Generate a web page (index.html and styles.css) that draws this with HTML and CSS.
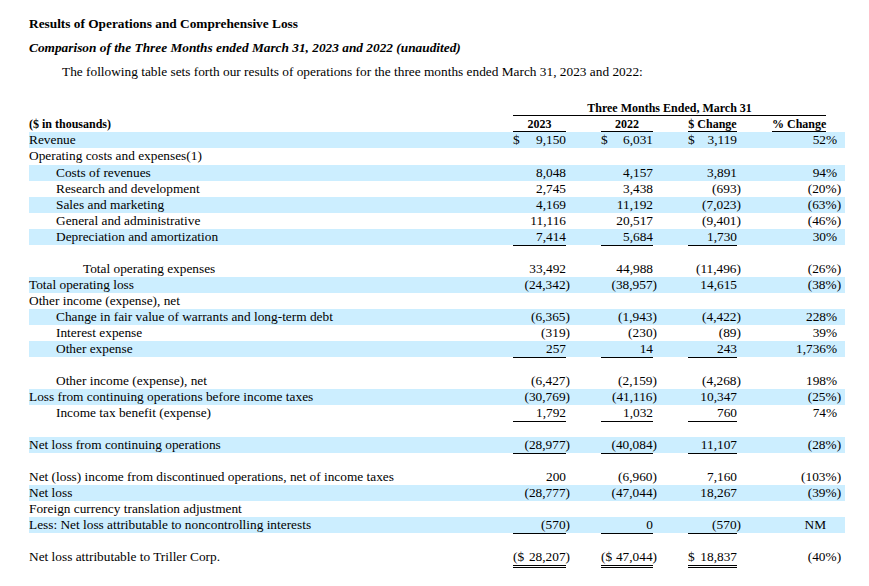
FILE: index.html
```html
<!DOCTYPE html>
<html lang="en">
<head>
<meta charset="utf-8">
<title>Results of Operations and Comprehensive Loss</title>
<link rel="stylesheet" href="styles.css">
</head>
<body>
<div class="page">
  <p class="title">Results of Operations and Comprehensive Loss</p>
  <p class="subtitle">Comparison of the Three Months ended March 31, 2023 and 2022 (unaudited)</p>
  <p class="intro">The following table sets forth our results of operations for the three months ended March 31, 2023 and 2022:</p>

  <table class="fin">
    <colgroup>
      <col class="c-lbl"><col class="c-v23"><col class="c-gap"><col class="c-v22"><col class="c-gap"><col class="c-vch"><col class="c-gap"><col class="c-pct"><col class="c-pct2"><col class="c-tail">
    </colgroup>
    <tbody>
      <tr class="hd">
        <td></td>
        <td class="span-hd" colspan="7">Three Months Ended, March 31</td>
        <td></td><td></td>
      </tr>
      <tr class="hd">
        <td class="lbl">($ in thousands)</td>
        <td class="hu">2023</td><td></td>
        <td class="hu">2022</td><td></td>
        <td class="hu">$ Change</td><td></td>
        <td class="hu">% Change</td><td></td><td></td>
      </tr>
      <tr class="band">
        <td>Revenue</td>
        <td class="v"><span class="cur">$</span>9,150</td><td></td>
        <td class="v"><span class="cur">$</span>6,031</td><td></td>
        <td class="v"><span class="cur">$</span>3,119</td><td></td>
        <td class="pc" colspan="2">52%</td><td></td>
      </tr>
      <tr class="tall">
        <td>Operating costs and expenses(1)</td>
        <td></td><td></td><td></td><td></td><td></td><td></td><td colspan="2"></td><td></td>
      </tr>
      <tr class="band">
        <td class="l1">Costs of revenues</td>
        <td class="v">8,048</td><td></td>
        <td class="v">4,157</td><td></td>
        <td class="v">3,891</td><td></td>
        <td class="pc" colspan="2">94%</td><td></td>
      </tr>
      <tr>
        <td class="l1">Research and development</td>
        <td class="v">2,745</td><td></td>
        <td class="v">3,438</td><td></td>
        <td class="v">(693<span class="h">)</span></td><td></td>
        <td class="pc" colspan="2">(20%<span class="h">)</span></td><td></td>
      </tr>
      <tr class="band">
        <td class="l1">Sales and marketing</td>
        <td class="v">4,169</td><td></td>
        <td class="v">11,192</td><td></td>
        <td class="v">(7,023<span class="h">)</span></td><td></td>
        <td class="pc" colspan="2">(63%<span class="h">)</span></td><td></td>
      </tr>
      <tr>
        <td class="l1">General and administrative</td>
        <td class="v">11,116</td><td></td>
        <td class="v">20,517</td><td></td>
        <td class="v">(9,401<span class="h">)</span></td><td></td>
        <td class="pc" colspan="2">(46%<span class="h">)</span></td><td></td>
      </tr>
      <tr class="band">
        <td class="l1">Depreciation and amortization</td>
        <td class="v u">7,414</td><td></td>
        <td class="v u">5,684</td><td></td>
        <td class="v u">1,730</td><td></td>
        <td class="pc" colspan="2">30%</td><td></td>
      </tr>
      <tr class="blank"><td colspan="10"></td></tr>
      <tr>
        <td class="l2">Total operating expenses</td>
        <td class="v">33,492</td><td></td>
        <td class="v">44,988</td><td></td>
        <td class="v">(11,496<span class="h">)</span></td><td></td>
        <td class="pc" colspan="2">(26%<span class="h">)</span></td><td></td>
      </tr>
      <tr class="band">
        <td>Total operating loss</td>
        <td class="v">(24,342<span class="h">)</span></td><td></td>
        <td class="v">(38,957<span class="h">)</span></td><td></td>
        <td class="v">14,615</td><td></td>
        <td class="pc" colspan="2">(38%<span class="h">)</span></td><td></td>
      </tr>
      <tr>
        <td>Other income (expense), net</td>
        <td></td><td></td><td></td><td></td><td></td><td></td><td colspan="2"></td><td></td>
      </tr>
      <tr class="band">
        <td class="l1">Change in fair value of warrants and long-term debt</td>
        <td class="v">(6,365<span class="h">)</span></td><td></td>
        <td class="v">(1,943<span class="h">)</span></td><td></td>
        <td class="v">(4,422<span class="h">)</span></td><td></td>
        <td class="pc" colspan="2">228%</td><td></td>
      </tr>
      <tr>
        <td class="l1">Interest expense</td>
        <td class="v">(319<span class="h">)</span></td><td></td>
        <td class="v">(230<span class="h">)</span></td><td></td>
        <td class="v">(89<span class="h">)</span></td><td></td>
        <td class="pc" colspan="2">39%</td><td></td>
      </tr>
      <tr class="band">
        <td class="l1">Other expense</td>
        <td class="v u">257</td><td></td>
        <td class="v u">14</td><td></td>
        <td class="v u">243</td><td></td>
        <td class="pc" colspan="2">1,736%</td><td></td>
      </tr>
      <tr class="blank"><td colspan="10"></td></tr>
      <tr>
        <td class="l1">Other income (expense), net</td>
        <td class="v">(6,427<span class="h">)</span></td><td></td>
        <td class="v">(2,159<span class="h">)</span></td><td></td>
        <td class="v">(4,268<span class="h">)</span></td><td></td>
        <td class="pc" colspan="2">198%</td><td></td>
      </tr>
      <tr class="band">
        <td>Loss from continuing operations before income taxes</td>
        <td class="v">(30,769<span class="h">)</span></td><td></td>
        <td class="v">(41,116<span class="h">)</span></td><td></td>
        <td class="v">10,347</td><td></td>
        <td class="pc" colspan="2">(25%<span class="h">)</span></td><td></td>
      </tr>
      <tr>
        <td class="l1">Income tax benefit (expense)</td>
        <td class="v u">1,792</td><td></td>
        <td class="v u">1,032</td><td></td>
        <td class="v u">760</td><td></td>
        <td class="pc" colspan="2">74%</td><td></td>
      </tr>
      <tr class="blank"><td colspan="10"></td></tr>
      <tr class="band">
        <td>Net loss from continuing operations</td>
        <td class="v u">(28,977<span class="h">)</span></td><td></td>
        <td class="v u">(40,084<span class="h">)</span></td><td></td>
        <td class="v u">11,107</td><td></td>
        <td class="pc" colspan="2">(28%<span class="h">)</span></td><td></td>
      </tr>
      <tr class="blank"><td colspan="10"></td></tr>
      <tr>
        <td>Net (loss) income from discontinued operations, net of income taxes</td>
        <td class="v">200</td><td></td>
        <td class="v">(6,960<span class="h">)</span></td><td></td>
        <td class="v">7,160</td><td></td>
        <td class="pc" colspan="2">(103%<span class="h">)</span></td><td></td>
      </tr>
      <tr class="band">
        <td>Net loss</td>
        <td class="v">(28,777<span class="h">)</span></td><td></td>
        <td class="v">(47,044<span class="h">)</span></td><td></td>
        <td class="v">18,267</td><td></td>
        <td class="pc" colspan="2">(39%<span class="h">)</span></td><td></td>
      </tr>
      <tr>
        <td>Foreign currency translation adjustment</td>
        <td></td><td></td><td></td><td></td><td></td><td></td><td colspan="2"></td><td></td>
      </tr>
      <tr class="band">
        <td>Less: Net loss attributable to noncontrolling interests</td>
        <td class="v u">(570<span class="h">)</span></td><td></td>
        <td class="v u">0</td><td></td>
        <td class="v u">(570<span class="h">)</span></td><td></td>
        <td class="nm">NM</td><td></td><td></td>
      </tr>
      <tr class="blank"><td colspan="10"></td></tr>
      <tr class="last">
        <td>Net loss attributable to Triller Corp.</td>
        <td class="v uu"><span class="cur">($</span>28,207<span class="h">)</span></td><td></td>
        <td class="v uu"><span class="cur">($</span>47,044<span class="h">)</span></td><td></td>
        <td class="v uu"><span class="cur">$</span>18,837</td><td></td>
        <td class="pc" colspan="2">(40%<span class="h">)</span></td><td></td>
      </tr>
    </tbody>
  </table>
</div>
</body>
</html>
```

FILE: styles.css
```css
html, body {
  margin: 0;
  padding: 0;
  background: #fff;
}

body {
  font-family: "Liberation Serif", "Times New Roman", serif;
  font-size: 13.33px;
  color: #000;
}

.page {
  width: 816px;
  padding: 16px 0 0 29px;
}

.title,
.subtitle,
.intro {
  margin: 0 0 8px;
  line-height: 16px;
  white-space: nowrap;
}

.title {
  font-weight: bold;
}

.subtitle {
  font-weight: bold;
  font-style: italic;
}

.intro {
  text-indent: 33px;
  margin-bottom: 20px;
}

.fin {
  width: 816px;
  table-layout: fixed;
  border-collapse: separate;
  border-spacing: 0;
}

.c-lbl { width: 484px; }
.c-v23 { width: 53px; }
.c-v22 { width: 52px; }
.c-vch { width: 49px; }
.c-gap { width: 35px; }
.c-pct { width: 54px; }
.c-pct2 { width: 11px; }
.c-tail { width: 8px; }

.fin td {
  padding: 0;
  height: 16px;
  line-height: 16px;
  white-space: nowrap;
  vertical-align: top;
}

.fin tr.tall td {
  height: 17px;
}

.fin tr.band td {
  background: #cceeff;
}

.fin tr.hd td {
  font-weight: bold;
  font-size: 12px;
  text-align: center;
}

.fin tr.hd td.lbl {
  text-align: left;
}

.fin td.span-hd {
  box-shadow: inset 0 -1px 0 #000;
}

.fin td.hu {
  box-shadow: inset 0 -1px 0 #000;
}

.l1 { padding-left: 27px !important; }
.l2 { padding-left: 54px !important; }

.fin td.v,
.fin td.pc {
  text-align: right;
}

.fin td.nm {
  text-align: right;
}

.cur {
  float: left;
}

.h {
  margin-right: -4px;
}

.fin td.u {
  box-shadow: 0 1px 0 #000;
}

.fin td.uu {
  border-bottom: 3px double #000;
}
```
